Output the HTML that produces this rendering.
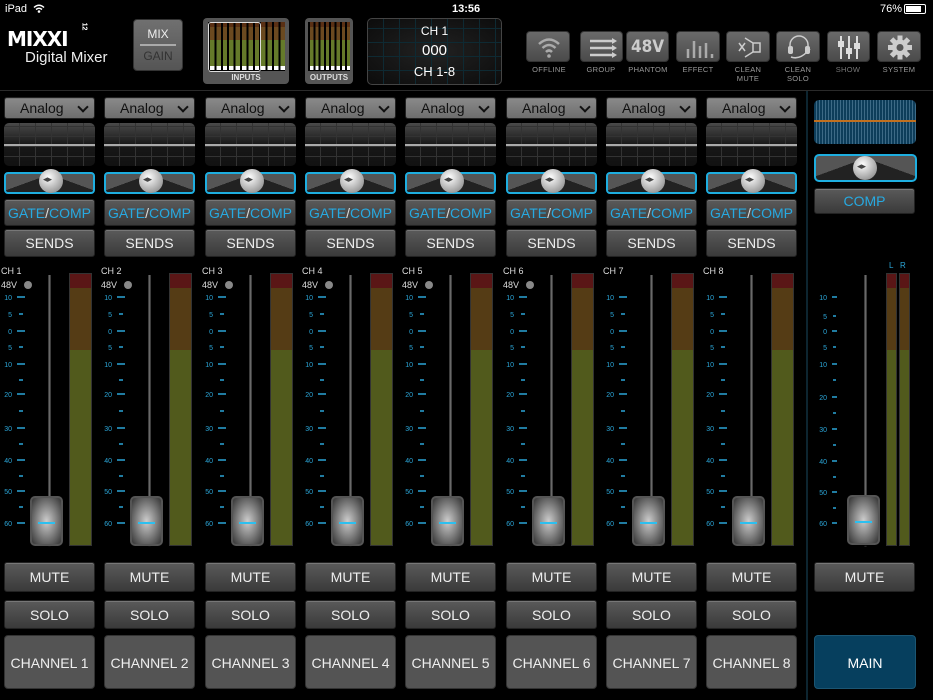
<!DOCTYPE html>
<html><head><meta charset="utf-8"><style>
*{box-sizing:border-box;margin:0;padding:0}
body{width:933px;height:700px;background:#000;overflow:hidden;position:relative;font-family:"Liberation Sans",sans-serif;color:#fff}
.a{position:absolute}
.col{position:absolute;top:0;width:92px;height:700px}
.btn{position:absolute;left:0;width:91px;border-radius:3px;background:linear-gradient(#5a5a5a,#3a3a3a);border:1px solid #222;box-shadow:inset 0 1px 0 #777;text-align:center;color:#eee;font-size:14px}
.dd{top:97px;height:22px;line-height:20px;background:linear-gradient(#8a8a8a,#6e6e6e);color:#111;font-size:14px;text-align:left;padding-left:15px}
.dd:after{content:"";position:absolute;right:7px;top:5px;width:6px;height:6px;border-right:2px solid #111;border-bottom:2px solid #111;transform:rotate(45deg)}
.eq{position:absolute;left:0;top:123px;width:91px;height:43px;border-radius:5px;
 background-image:linear-gradient(rgba(0,0,0,0) 49%,#aaa 49%,#aaa 53%,rgba(0,0,0,0) 53%),repeating-linear-gradient(90deg,transparent 0 15px,#333 15px 16px),repeating-linear-gradient(0deg,transparent 0 9px,#333 9px 10px),linear-gradient(#4a4a4a,#181818 50%,#111)}
.pan{position:absolute;left:0;top:172px;width:91px;height:22px;border:2px solid #1eaee0;border-radius:4px;background:linear-gradient(160deg,#555 0 48%,#222 48%) left/50% 100% no-repeat,linear-gradient(200deg,#555 0 48%,#222 48%) right/50% 100% no-repeat;background-color:#222}
.knobp{position:absolute;left:33px;top:-5px;width:24px;height:24px;border-radius:50%;background:radial-gradient(circle at 40% 35%,#fff,#bbb 50%,#777);}
.knobp:after{content:"◂▸";position:absolute;left:4px;top:5px;font-size:9px;color:#444}
.gc{top:199px;height:27px;line-height:26px;color:#27a9e1;font-size:14px}
.sd{top:229px;height:28px;line-height:27px}
.ch{position:absolute;left:-3px;top:266px;font-size:9px;color:#ddd}
.v48{position:absolute;left:-3px;top:280px;font-size:9px;color:#ddd}
.v48:after{content:"";position:absolute;left:23px;top:1px;width:8px;height:8px;border-radius:50%;background:#888}
.fl{position:absolute;left:44px;top:275px;width:3px;height:272px;background:linear-gradient(90deg,#222,#777,#222)}
.kn{position:absolute;left:26px;top:496px;width:33px;height:50px;border-radius:5px;background:radial-gradient(ellipse at 50% 50%,#ccc,#888 45%,#333);border:2px solid #555;box-shadow:0 2px 2px #000}
.kn:after{content:"";position:absolute;left:6px;top:24px;width:17px;height:2px;background:#2bc0f0}
.mt{position:absolute;left:65px;top:273px;width:23px;height:273px;border:1px solid #333;background:linear-gradient(#5a1616 0 14px,#553c15 14px 76px,#515a1c 76px)}
.mu{top:562px;height:30px;line-height:29px}
.so{top:600px;height:29px;line-height:28px}
.cn{top:635px;height:54px;line-height:54px;background:#545454;box-shadow:none;border:1px solid #333;border-radius:4px}
svg.sc{position:absolute;left:-4px;top:0}
.ib{position:absolute;top:31px;width:44px;height:31px;border-radius:4px;background:linear-gradient(#6a6a6a,#4a4a4a);border:1px solid #333}
.il{position:absolute;top:65px;font-size:7.5px;color:#999;text-align:center;width:60px;line-height:9px;letter-spacing:.3px}
</style></head><body>
<div class="a" style="left:5px;top:3px;font-size:11px">iPad</div>
<svg class="a" style="left:33px;top:4px" width="12" height="9"><path d="M1 3.5 Q6 -1 11 3.5 M3 5.5 Q6 3 9 5.5" stroke="#fff" stroke-width="1.5" fill="none"/><circle cx="6" cy="7.5" r="1.3" fill="#fff"/></svg>
<div class="a" style="left:452px;top:3px;font-size:11px;font-weight:bold">13:56</div>
<div class="a" style="left:880px;top:3px;font-size:11px">76%</div>
<div class="a" style="left:904px;top:4px;width:22px;height:10px;border:1px solid #fff;border-radius:2px;padding:1px"><div style="width:15px;height:6px;background:#fff"></div></div>

<div class="a" style="left:7px;top:27px;font-size:20px;font-weight:bold;letter-spacing:-1px;font-family:'DejaVu Sans',sans-serif">MIXXI</div>
<div class="a" style="left:80px;top:23px;font-size:7px;font-weight:bold;transform:rotate(90deg)">12</div>
<div class="a" style="left:25px;top:49px;font-size:15px;color:#eee">Digital Mixer</div>

<div class="a" style="left:133px;top:19px;width:50px;height:52px;border-radius:4px;background:linear-gradient(#707070,#555);border:1px solid #333;text-align:center;font-size:12px">
<div style="margin-top:7px;color:#eee">MIX</div><div style="height:2px;width:36px;margin:3px auto;background:#aaa"></div><div style="color:#333">GAIN</div></div>

<div class="a" style="left:203px;top:18px;width:86px;height:66px;border-radius:4px;background:#555">
<div class="a" style="left:5px;top:4px;width:77px;height:49px;background:repeating-linear-gradient(90deg,#000 0 2px,transparent 2px 6.4px),linear-gradient(#5a3014 0 5px,#6b4a20 5px 18px,#657a2a 18px 44px,#fff 44px 48px,#000 48px)"></div>
<div class="a" style="left:5px;top:4px;width:53px;height:50px;border:1px solid #ddd;border-radius:3px"></div>
<div class="a" style="left:0;top:55px;width:86px;text-align:center;font-size:8px;color:#ddd;font-weight:bold">INPUTS</div></div>
<div class="a" style="left:305px;top:18px;width:48px;height:66px;border-radius:4px;background:#555">
<div class="a" style="left:3px;top:4px;width:42px;height:49px;background:repeating-linear-gradient(90deg,#000 0 2px,transparent 2px 5.3px),linear-gradient(#5a3014 0 5px,#6b4a20 5px 18px,#657a2a 18px 44px,#fff 44px 48px,#000 48px)"></div>
<div class="a" style="left:0;top:55px;width:48px;text-align:center;font-size:8px;color:#ddd;font-weight:bold">OUTPUTS</div></div>
<div class="a" style="left:367px;top:18px;width:135px;height:67px;border-radius:5px;border:1px solid #444;background:repeating-linear-gradient(90deg,transparent 0 15px,#0e2a33 15px 16px),repeating-linear-gradient(0deg,transparent 0 13px,#0e2a33 13px 14px),radial-gradient(#222,#0c0c0c);text-align:center">
<div style="font-size:12px;margin-top:5px">CH 1</div><div style="font-size:15px;margin-top:4px">000</div><div style="font-size:13px;margin-top:5px">CH 1-8</div></div>

<div class="ib" style="left:526px"><svg width="44" height="31"><g stroke="#aaa" stroke-width="2.5" fill="none"><path d="M12 12 Q22 3 32 12"/><path d="M15.5 16 Q22 10 28.5 16"/><path d="M19 20 Q22 17 25 20"/></g><circle cx="22" cy="24" r="1.8" fill="#aaa"/></svg></div>
<div class="il" style="left:519px">OFFLINE</div>
<div class="ib" style="left:580px;width:43px"><svg width="43" height="31"><g stroke="#ccc" stroke-width="2.5"><path d="M9 9H32M9 16H32M9 23H32"/></g><g fill="#ccc"><path d="M31 6l5 3-5 3zM31 13l5 3-5 3zM31 20l5 3-5 3z"/></g></svg></div>
<div class="il" style="left:571px">GROUP</div>
<div class="ib" style="left:626px;width:43px;font-size:17px;font-weight:bold;color:#ccc;text-align:center;line-height:30px;font-family:'DejaVu Sans Condensed','DejaVu Sans',sans-serif">48V</div>
<div class="il" style="left:618px">PHANTOM</div>
<div class="ib" style="left:676px"><svg width="44" height="31"><g stroke="#aaa" stroke-width="2.5"><path d="M11 26V17M17 26V9M23 26V14M29 26V11M35 26V22"/></g></svg></div>
<div class="il" style="left:668px">EFFECT</div>
<div class="ib" style="left:726px"><svg width="44" height="31"><g stroke="#ccc" stroke-width="1.5" fill="none"><path d="M18 6L26 11V20L18 25M26 11H33V20H26"/><path d="M12 11l6 8M18 11l-6 8"/></g></svg></div>
<div class="il" style="left:718px">CLEAN<br>MUTE</div>
<div class="ib" style="left:776px"><svg width="44" height="31"><g stroke="#ccc" stroke-width="1.5" fill="none"><path d="M13 18V13a9 9 0 0 1 18 0v5"/><path d="M14 25Q22 28 30 20l3 -3"/></g><rect x="11" y="14" width="5" height="8" rx="2" fill="#ccc"/><rect x="28" y="14" width="5" height="8" rx="2" fill="#ccc"/></svg></div>
<div class="il" style="left:768px">CLEAN<br>SOLO</div>
<div class="ib" style="left:827px;width:43px"><svg width="43" height="31"><g stroke="#ddd" stroke-width="2"><path d="M13 4V27M21 4V27M29 4V27"/></g><g fill="#ddd"><rect x="10" y="9" width="6" height="6"/><rect x="18" y="16" width="6" height="6"/><rect x="26" y="11" width="6" height="6"/></g></svg></div>
<div class="il" style="left:818px;color:#777">SHOW</div>
<div class="ib" style="left:877px"><svg width="44" height="31" viewBox="0 0 44 31"><g transform="translate(22 15.5)" fill="#ccc"><circle r="8"/><g><rect x="-2.5" y="-12" width="5" height="24"/><rect x="-2.5" y="-12" width="5" height="24" transform="rotate(45)"/><rect x="-2.5" y="-12" width="5" height="24" transform="rotate(90)"/><rect x="-2.5" y="-12" width="5" height="24" transform="rotate(135)"/></g><circle r="3.5" fill="#555"/></g></svg></div>
<div class="il" style="left:869px">SYSTEM</div>
<div class="a" style="left:0;top:90px;width:933px;height:1px;background:#2a2a2a"></div>
<div class="a" style="left:806px;top:91px;width:2px;height:609px;background:#0d2530"></div>

<svg width="0" height="0" style="position:absolute"><defs><g id="scl" fill="#2ba6d8" stroke="#2ba6d8" font-size="7" font-family="Liberation Sans, sans-serif" text-anchor="end">
<g stroke="none">
<text x="12" y="300">10</text><text x="12" y="317">5</text><text x="12" y="334">0</text><text x="12" y="350">5</text><text x="12" y="367">10</text><text x="12" y="397">20</text><text x="12" y="431">30</text><text x="12" y="463">40</text><text x="12" y="494">50</text><text x="12" y="526">60</text></g>
<g stroke-width="1.5">
<line x1="17" y1="297" x2="25" y2="297"/><line x1="19" y1="314" x2="23" y2="314"/><line x1="17" y1="331" x2="25" y2="331"/><line x1="19" y1="347" x2="23" y2="347"/><line x1="17" y1="364" x2="25" y2="364"/><line x1="19" y1="380" x2="23" y2="380"/><line x1="17" y1="394" x2="25" y2="394"/><line x1="19" y1="411" x2="23" y2="411"/><line x1="17" y1="428" x2="25" y2="428"/><line x1="19" y1="444" x2="23" y2="444"/><line x1="17" y1="460" x2="25" y2="460"/><line x1="19" y1="476" x2="23" y2="476"/><line x1="17" y1="491" x2="25" y2="491"/><line x1="19" y1="507" x2="23" y2="507"/><line x1="17" y1="523" x2="25" y2="523"/></g>
</g></defs></svg>

<div class="col" style="left:4px"><div class="btn dd">Analog</div><div class="eq"></div><div class="pan"><div class="knobp"></div></div><div class="btn gc">GATE<span style="color:#ddd">/</span>COMP</div><div class="btn sd">SENDS</div><div class="ch">CH 1</div><div class="v48">48V</div><svg class="sc" width="30" height="540"><use href="#scl"/></svg><div class="fl"></div><div class="mt"></div><div class="kn"></div><div class="btn mu">MUTE</div><div class="btn so">SOLO</div><div class="btn cn">CHANNEL 1</div></div>
<div class="col" style="left:104px"><div class="btn dd">Analog</div><div class="eq"></div><div class="pan"><div class="knobp"></div></div><div class="btn gc">GATE<span style="color:#ddd">/</span>COMP</div><div class="btn sd">SENDS</div><div class="ch">CH 2</div><div class="v48">48V</div><svg class="sc" width="30" height="540"><use href="#scl"/></svg><div class="fl"></div><div class="mt"></div><div class="kn"></div><div class="btn mu">MUTE</div><div class="btn so">SOLO</div><div class="btn cn">CHANNEL 2</div></div>
<div class="col" style="left:205px"><div class="btn dd">Analog</div><div class="eq"></div><div class="pan"><div class="knobp"></div></div><div class="btn gc">GATE<span style="color:#ddd">/</span>COMP</div><div class="btn sd">SENDS</div><div class="ch">CH 3</div><div class="v48">48V</div><svg class="sc" width="30" height="540"><use href="#scl"/></svg><div class="fl"></div><div class="mt"></div><div class="kn"></div><div class="btn mu">MUTE</div><div class="btn so">SOLO</div><div class="btn cn">CHANNEL 3</div></div>
<div class="col" style="left:305px"><div class="btn dd">Analog</div><div class="eq"></div><div class="pan"><div class="knobp"></div></div><div class="btn gc">GATE<span style="color:#ddd">/</span>COMP</div><div class="btn sd">SENDS</div><div class="ch">CH 4</div><div class="v48">48V</div><svg class="sc" width="30" height="540"><use href="#scl"/></svg><div class="fl"></div><div class="mt"></div><div class="kn"></div><div class="btn mu">MUTE</div><div class="btn so">SOLO</div><div class="btn cn">CHANNEL 4</div></div>
<div class="col" style="left:405px"><div class="btn dd">Analog</div><div class="eq"></div><div class="pan"><div class="knobp"></div></div><div class="btn gc">GATE<span style="color:#ddd">/</span>COMP</div><div class="btn sd">SENDS</div><div class="ch">CH 5</div><div class="v48">48V</div><svg class="sc" width="30" height="540"><use href="#scl"/></svg><div class="fl"></div><div class="mt"></div><div class="kn"></div><div class="btn mu">MUTE</div><div class="btn so">SOLO</div><div class="btn cn">CHANNEL 5</div></div>
<div class="col" style="left:506px"><div class="btn dd">Analog</div><div class="eq"></div><div class="pan"><div class="knobp"></div></div><div class="btn gc">GATE<span style="color:#ddd">/</span>COMP</div><div class="btn sd">SENDS</div><div class="ch">CH 6</div><div class="v48">48V</div><svg class="sc" width="30" height="540"><use href="#scl"/></svg><div class="fl"></div><div class="mt"></div><div class="kn"></div><div class="btn mu">MUTE</div><div class="btn so">SOLO</div><div class="btn cn">CHANNEL 6</div></div>
<div class="col" style="left:606px"><div class="btn dd">Analog</div><div class="eq"></div><div class="pan"><div class="knobp"></div></div><div class="btn gc">GATE<span style="color:#ddd">/</span>COMP</div><div class="btn sd">SENDS</div><div class="ch">CH 7</div><svg class="sc" width="30" height="540"><use href="#scl"/></svg><div class="fl"></div><div class="mt"></div><div class="kn"></div><div class="btn mu">MUTE</div><div class="btn so">SOLO</div><div class="btn cn">CHANNEL 7</div></div>
<div class="col" style="left:706px"><div class="btn dd">Analog</div><div class="eq"></div><div class="pan"><div class="knobp"></div></div><div class="btn gc">GATE<span style="color:#ddd">/</span>COMP</div><div class="btn sd">SENDS</div><div class="ch">CH 8</div><svg class="sc" width="30" height="540"><use href="#scl"/></svg><div class="fl"></div><div class="mt"></div><div class="kn"></div><div class="btn mu">MUTE</div><div class="btn so">SOLO</div><div class="btn cn">CHANNEL 8</div></div>

<!-- master -->
<div class="a" style="left:814px;top:100px;width:102px;height:44px;border-radius:5px;background:linear-gradient(transparent 20px,#c07020 20px,#c07020 22px,transparent 22px),repeating-linear-gradient(90deg,#0d3d5a 0 2px,#3d6a86 2px 3px);"></div>
<div class="a" style="left:814px;top:154px;width:103px;height:28px;border:2px solid #1eaee0;border-radius:5px;background:linear-gradient(160deg,#555 0 48%,#222 48%) left/50% 100% no-repeat,linear-gradient(200deg,#555 0 48%,#222 48%) right/50% 100% no-repeat"><div class="knobp" style="left:37px;top:0"></div></div>
<div class="btn" style="left:814px;top:188px;width:101px;height:26px;line-height:25px;color:#27a9e1;font-size:14px">COMP</div>
<div class="a" style="left:889px;top:261px;font-size:8px;color:#2ba6d8">L</div>
<div class="a" style="left:900px;top:261px;font-size:8px;color:#2ba6d8">R</div>
<svg class="a" style="left:812px;top:0" width="30" height="540" viewBox="0 0 30 540"><g fill="#2ba6d8" font-size="7" font-family="Liberation Sans, sans-serif" text-anchor="end">
<text x="15" y="300">10</text><text x="15" y="319">5</text><text x="15" y="334">0</text><text x="15" y="350">5</text><text x="15" y="367">10</text><text x="15" y="400">20</text><text x="15" y="432">30</text><text x="15" y="464">40</text><text x="15" y="495">50</text><text x="15" y="526">60</text></g>
<g stroke="#2ba6d8" stroke-width="1.5">
<line x1="20" y1="297" x2="25" y2="297"/><line x1="21" y1="316" x2="24" y2="316"/><line x1="20" y1="331" x2="25" y2="331"/><line x1="21" y1="347" x2="24" y2="347"/><line x1="20" y1="364" x2="25" y2="364"/><line x1="21" y1="380" x2="24" y2="380"/><line x1="20" y1="397" x2="25" y2="397"/><line x1="21" y1="413" x2="24" y2="413"/><line x1="20" y1="429" x2="25" y2="429"/><line x1="21" y1="445" x2="24" y2="445"/><line x1="20" y1="461" x2="25" y2="461"/><line x1="21" y1="477" x2="24" y2="477"/><line x1="20" y1="492" x2="25" y2="492"/><line x1="21" y1="508" x2="24" y2="508"/><line x1="20" y1="523" x2="25" y2="523"/></g></svg>
<div class="a" style="left:864px;top:275px;width:3px;height:272px;background:linear-gradient(90deg,#222,#777,#222)"></div>
<div class="a mt" style="left:886px;width:11px"></div>
<div class="a mt" style="left:899px;width:11px"></div>
<div class="kn" style="left:847px;top:495px"></div>
<div class="btn" style="left:814px;top:562px;width:101px;height:30px;line-height:29px">MUTE</div>
<div class="a" style="left:814px;top:635px;width:102px;height:54px;line-height:54px;border-radius:4px;background:#063f5e;border:1px solid #1b5572;text-align:center;font-size:14px">MAIN</div>
</body></html>
